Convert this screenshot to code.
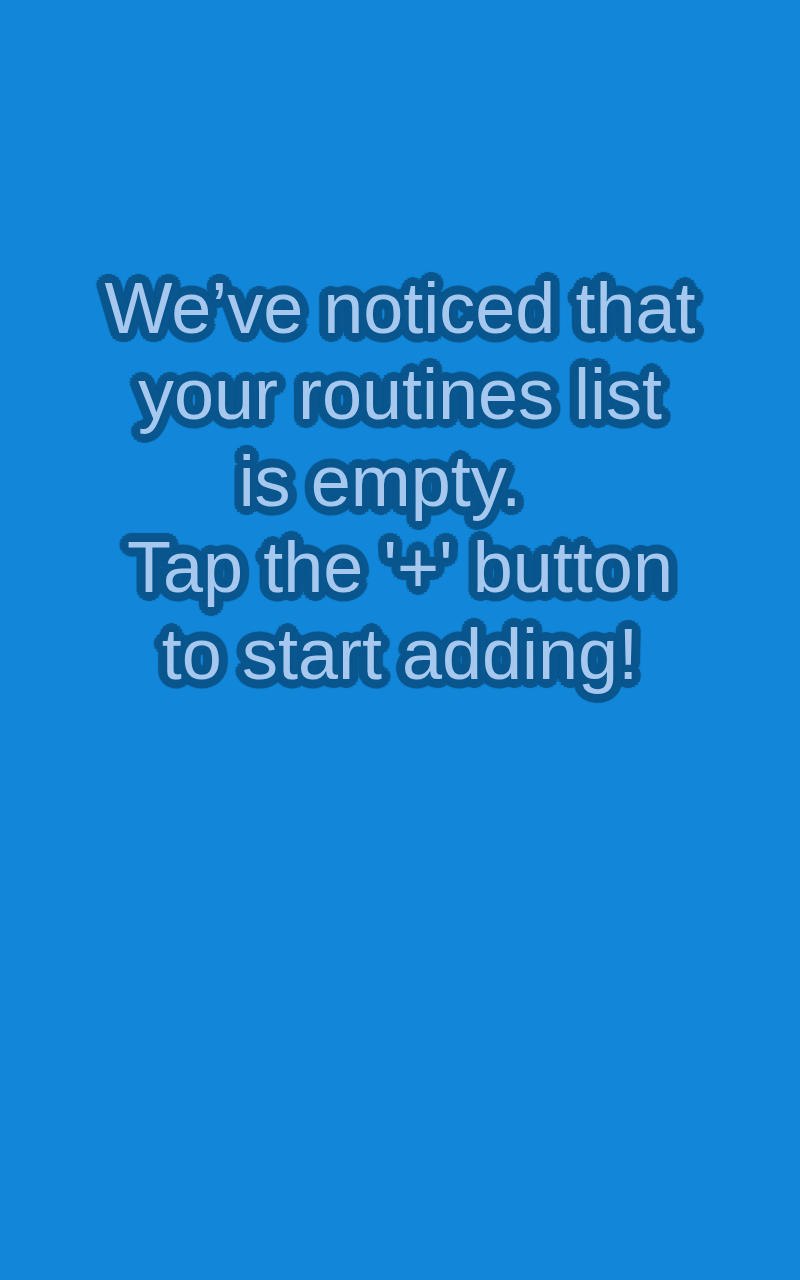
import React from "react";

const lines = [
  "We\u2019ve noticed that",
  "your routines list",
  "is empty.\u00a0\u00a0",
  "Tap the '+' button",
  "to start adding!",
];

const App = () => {
  return (
    <div className="min-h-[1280px] w-full bg-[#1287d9] pt-[265px]">
      {/* outline is a ring of text shadows so the corners come out round */}
      <p className="text-center font-['Liberation_Sans',Arial,sans-serif] text-[72px] leading-[86.4px] text-[#a6c8ee] [text-shadow:9px_0_1px_#0a568e,8.3px_3.4px_1px_#0a568e,6.4px_6.4px_1px_#0a568e,3.4px_8.3px_1px_#0a568e,0_9px_1px_#0a568e,-3.4px_8.3px_1px_#0a568e,-6.4px_6.4px_1px_#0a568e,-8.3px_3.4px_1px_#0a568e,-9px_0_1px_#0a568e,-8.3px_-3.4px_1px_#0a568e,-6.4px_-6.4px_1px_#0a568e,-3.4px_-8.3px_1px_#0a568e,0_-9px_1px_#0a568e,3.4px_-8.3px_1px_#0a568e,6.4px_-6.4px_1px_#0a568e,8.3px_-3.4px_1px_#0a568e,4px_0_0_#0a568e,-4px_0_0_#0a568e,0_4px_0_#0a568e,0_-4px_0_#0a568e]">
        {lines.map((l, i) => (
          <React.Fragment key={i}>
            {l}
            <br />
          </React.Fragment>
        ))}
      </p>
    </div>
  );
};

export default App;
